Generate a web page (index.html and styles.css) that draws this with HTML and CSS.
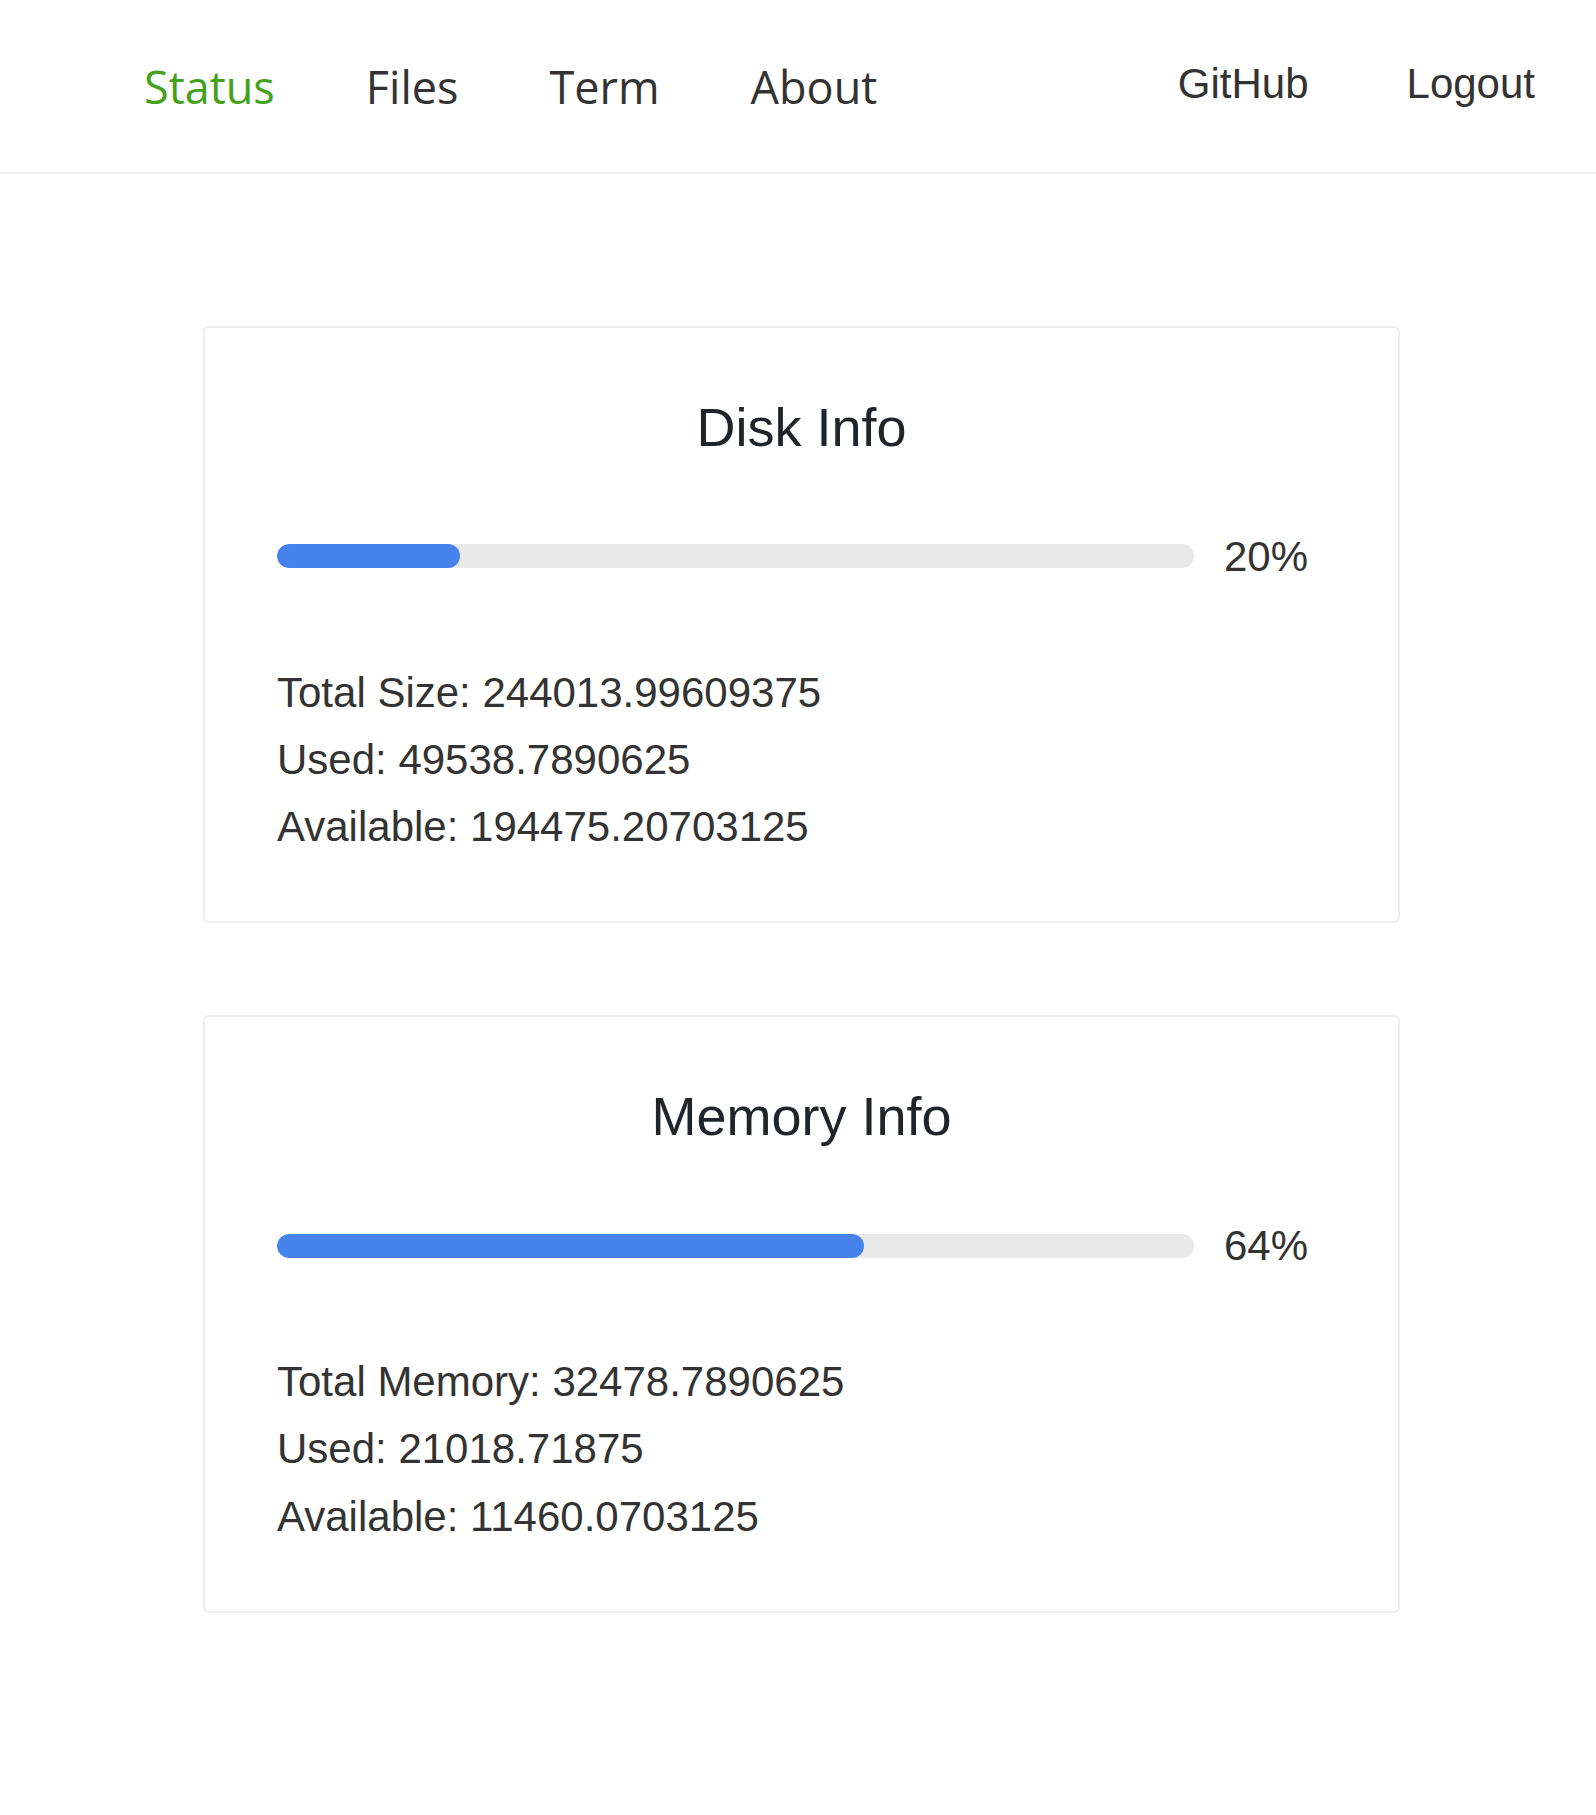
FILE: index.html
```html
<!DOCTYPE html>
<html lang="en">
<head>
<meta charset="utf-8">
<title>Status</title>
<link rel="stylesheet" href="styles.css">
</head>
<body>
<header class="navbar">
  <nav class="nav-left">
    <a class="nav-link active" href="#">Status</a>
    <a class="nav-link" href="#">Files</a>
    <a class="nav-link" href="#">Term</a>
    <a class="nav-link" href="#">About</a>
  </nav>
  <nav class="nav-right">
    <a class="nav-ext" href="#">GitHub</a>
    <a class="nav-ext" href="#">Logout</a>
  </nav>
</header>
<main class="content">
  <section class="card">
    <h3 class="card-title">Disk Info</h3>
    <div class="progress-row">
      <div class="progress-track"><div class="progress-fill" style="width: 20%"></div></div>
      <span class="progress-text">20%</span>
    </div>
    <div class="info-list">
      <p class="info-line">Total Size: 244013.99609375</p>
      <p class="info-line">Used: 49538.7890625</p>
      <p class="info-line">Available: 194475.20703125</p>
    </div>
  </section>
  <section class="card">
    <h3 class="card-title">Memory Info</h3>
    <div class="progress-row">
      <div class="progress-track"><div class="progress-fill" style="width: 64%"></div></div>
      <span class="progress-text">64%</span>
    </div>
    <div class="info-list">
      <p class="info-line">Total Memory: 32478.7890625</p>
      <p class="info-line">Used: 21018.71875</p>
      <p class="info-line">Available: 11460.0703125</p>
    </div>
  </section>
</main>
</body>
</html>
```
FILE: styles.css
```css
* { box-sizing: border-box; }
html, body { margin: 0; padding: 0; background: #ffffff; }
body { font-family: "Liberation Sans", Arial, sans-serif; color: #333333; }

.navbar {
  height: 174px;
  border-bottom: 2px solid #ededf2;
  display: flex;
  align-items: center;
  justify-content: space-between;
  padding: 0 61px 0 144px;
}
.nav-left { display: flex; align-items: center; gap: 91px; }
.nav-link {
  font-family: "Open Sans", "Noto Sans", sans-serif;
  font-size: 45px;
  color: #333333;
  text-decoration: none;
  line-height: normal;
}
.nav-link.active { color: #44a11c; }
.nav-right { display: flex; align-items: center; gap: 98px; }
.nav-ext {
  font-family: "Liberation Sans", Arial, sans-serif;
  font-size: 42px;
  color: #333333;
  text-decoration: none;
  line-height: normal;
  position: relative;
  top: -2px;
}

.content {
  padding: 152px 0 200px 203px;
  display: flex;
  flex-direction: column;
  gap: 92px;
}
.card {
  width: 1197px;
  border: 2px solid #ededf2;
  border-radius: 6px;
  padding: 67px 72px 61px 72px;
}
.card-title {
  margin: 0;
  text-align: center;
  font-size: 54px;
  font-weight: normal;
  line-height: 1.2;
  color: #212529;
}
.progress-row {
  margin-top: 63px;
  display: flex;
  align-items: center;
  height: 67px;
}
.progress-track {
  flex: 0 0 917px;
  height: 24px;
  background: #e9e9e9;
  border-radius: 12px;
  overflow: hidden;
}
.progress-fill {
  height: 100%;
  background: #4582ec;
  border-radius: 12px;
}
.progress-text {
  margin-left: 30px;
  font-size: 42px;
  line-height: 1.6;
  color: #333333;
}
.info-list { margin-top: 69px; }
.info-line {
  margin: 0;
  font-size: 42px;
  line-height: 1.6;
  color: #333333;
}
```
